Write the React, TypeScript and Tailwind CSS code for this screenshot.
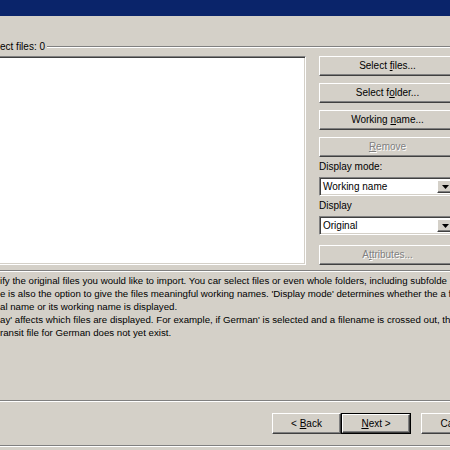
import type { ReactNode } from "react";

const raised =
  "border border-t-white border-l-white border-b-[#404040] border-r-[#404040] shadow-[inset_-1px_-1px_0_#808080]";
const sunken =
  "border border-t-[#808080] border-l-[#808080] border-b-white border-r-white shadow-[inset_1px_1px_0_#404040,inset_-1px_-1px_0_#d4d0c8]";

function Etched() {
  return <div className="h-0 border-t border-t-[#808080] border-b border-b-white" />;
}

function WinButton({
  children,
  disabled,
  className = "",
}: {
  children: ReactNode;
  disabled?: boolean;
  className?: string;
}) {
  return (
    <div
      className={`flex shrink-0 items-center justify-center bg-[#d4d0c8] ${raised} ${className} ${
        disabled ? "text-[#808080] [text-shadow:1px_1px_0_#fff]" : "text-black"
      }`}
    >
      <span className="whitespace-nowrap leading-none">{children}</span>
    </div>
  );
}

function Combo({ value }: { value: string }) {
  return (
    <div className={`flex h-[19px] items-stretch bg-white p-[2px] ${sunken}`}>
      <span className="flex flex-1 items-center whitespace-nowrap pl-[1px] leading-none">{value}</span>
      <div className={`flex w-[16px] items-center justify-center bg-[#d4d0c8] ${raised}`}>
        <svg width="7" height="4" viewBox="0 0 7 4">
          <path d="M0 0h7L3.5 4z" fill="#000" />
        </svg>
      </div>
    </div>
  );
}

const helpLines = [
  "ify the original files you would like to import. You car select files or even whole folders, including subfolde",
  "e is also the option to give the files meaningful working names. 'Display mode' determines whether the a f",
  "al name or its working name is displayed.",
  "ay' affects which files are displayed. For example, if German' is selected and a filename is crossed out, th",
  "ransit file for German does not yet exist.",
];

export default function App() {
  return (
    <div className="h-[450px] w-[450px] overflow-hidden bg-[#d4d0c8] font-['Liberation_Sans',Arial,sans-serif] text-[10px] text-black">
      <div className="h-[16px] bg-[#0a246a]" />
      <div className="h-[26px]" />

      {/* group box header */}
      <div className="flex h-[10px] items-center">
        <span className="whitespace-nowrap pr-[2px] leading-[10px]">ect files: 0</span>
        <div className="flex-1">
          <Etched />
        </div>
      </div>

      <div className="mt-[4px] flex w-[470px]">
        <div className={`-ml-[4px] h-[209px] w-[310px] bg-white ${sunken}`} />
        <div className="ml-[13px] flex w-[137px] flex-col">
          <WinButton className="h-[20px]">
            Select <u>f</u>iles...
          </WinButton>
          <WinButton className="mt-[7px] h-[20px]">
            Select f<u>o</u>lder...
          </WinButton>
          <WinButton className="mt-[7px] h-[20px]">
            Working <u>n</u>ame...
          </WinButton>
          <WinButton disabled className="mt-[7px] h-[20px]">
            <u>R</u>emove
          </WinButton>
          <div className="mt-[4px] leading-[12px]">Display mode:</div>
          <div className="mt-[4px]">
            <Combo value="Working name" />
          </div>
          <div className="mt-[4px] leading-[12px]">Display</div>
          <div className="mt-[4px]">
            <Combo value="Original" />
          </div>
          <WinButton disabled className="mt-[10px] h-[20px]">
            A<u>t</u>tributes...
          </WinButton>
        </div>
      </div>

      <div className="mt-[5px]">
        <Etched />
      </div>

      <div className="mt-[2px] w-[450px] overflow-hidden text-[9.7px] leading-[13px]">
        {helpLines.map((line) => (
          <div key={line} className="whitespace-nowrap">
            {line}
          </div>
        ))}
      </div>

      <div className="mt-[61px]">
        <Etched />
      </div>

      <div className="mt-[11px] flex w-[540px] pl-[272px]">
        <WinButton className="h-[21px] w-[69px]">
          &lt; <u>B</u>ack
        </WinButton>
        <div className="h-[21px] w-[70px] shrink-0 border border-black">
          <WinButton className="h-full w-full">
            <u>N</u>ext &gt;
          </WinButton>
        </div>
        <WinButton className="ml-[10px] h-[21px] w-[70px]">Cancel</WinButton>
      </div>

      <div className="mt-[11px] border-t border-t-[#808080] border-b border-b-white" />
    </div>
  );
}
